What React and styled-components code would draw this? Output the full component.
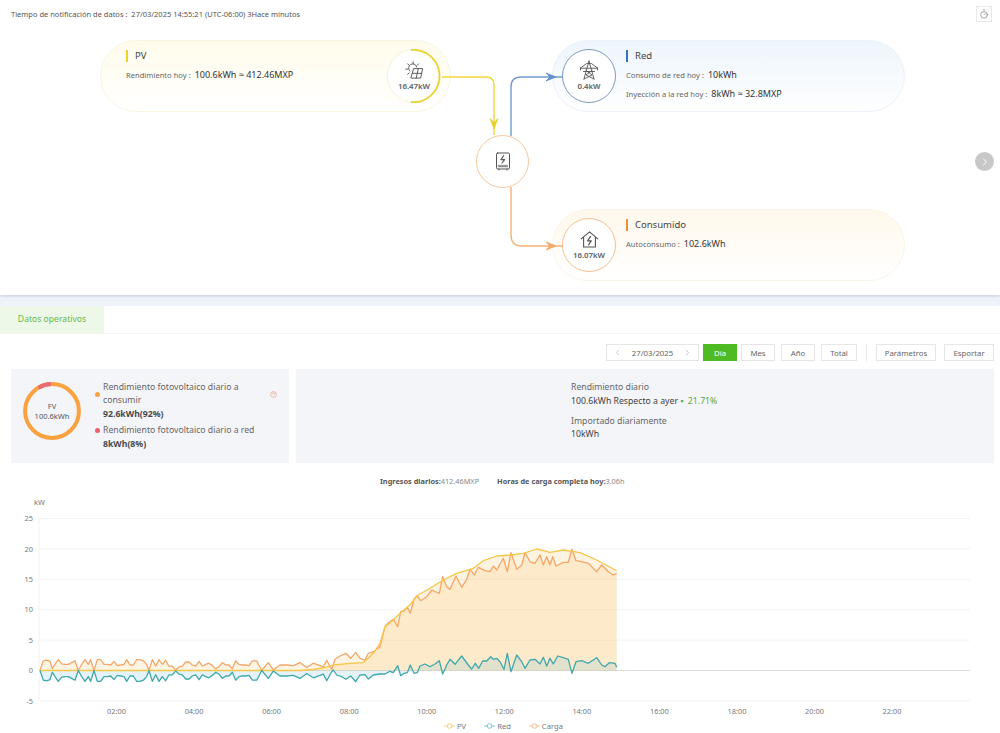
import React from "react";
import styled, { createGlobalStyle } from "styled-components";
import { Timer, ChevronLeft, ChevronRight, ChevronRight as NextIcon } from "lucide-react";

const Global = createGlobalStyle`
  html, body { margin: 0; padding: 0; background: #fff; }
  body { font-family: "Noto Sans", "Open Sans", "Liberation Sans", sans-serif; color: #444; }
  #root { width: 1000px; height: 733px; overflow: hidden; }
  * { box-sizing: border-box; }
`;

const Page = styled.div`
  width: 1000px;
  height: 733px;
  overflow: hidden;
  display: flex;
  flex-direction: column;
  background: #fff;
`;

const TopPanel = styled.section`
  height: 295px;
  flex: none;
  background: #fff;
  box-shadow: 0 1px 3px rgba(120, 135, 170, 0.35);
  position: relative;
  z-index: 1;
`;

const Header = styled.header`
  height: 28px;
  padding: 6px 8px 0 11px;
  display: flex;
  justify-content: space-between;
  align-items: flex-start;
`;

const Notice = styled.div`
  font-size: 7.5px;
  line-height: 16px;
  color: #555;
  white-space: pre;
`;

const ClockButton = styled.button`
  width: 16px;
  height: 16px;
  padding: 0;
  background: #fff;
  border: 1px solid #e8e8e8;
  display: flex;
  align-items: center;
  justify-content: center;
  color: #666;
`;

const Canvas = styled.div`
  position: relative;
  height: 267px;
`;

const Wires = styled.svg`
  position: absolute;
  left: 0;
  top: 0;
  width: 1000px;
  height: 267px;
  z-index: 2;
  pointer-events: none;
`;

const tones = {
  pv: { top: "#fffcec", edge: "#faf6e0", bar: "#f2d02c", ring: "#f6f2da" },
  grid: { top: "#edf5fc", edge: "#ebf2fa", bar: "#3b72bd", ring: "#7d9cc4" },
  load: { top: "#fff8ec", edge: "#fbf5e9", bar: "#f0913a", ring: "#f4c193" },
};

const Card = styled.div`
  position: absolute;
  left: ${(p) => p.$left}px;
  top: ${(p) => p.$top}px;
  width: ${(p) => p.$width}px;
  height: 72px;
  border-radius: 36px;
  border: 1px solid ${(p) => tones[p.$tone].edge};
  background: linear-gradient(180deg, ${(p) => tones[p.$tone].top} 0%, #fff 100%);
  display: flex;
  align-items: center;
  justify-content: ${(p) => (p.$tone === "pv" ? "space-between" : "flex-start")};
  gap: 10px;
  padding: ${(p) => (p.$tone === "pv" ? "0 9px 0 25px" : "0 0 0 9px")};
`;

const Info = styled.div`
  align-self: flex-start;
  padding-top: 9px;
  display: flex;
  flex-direction: column;
`;

const Title = styled.div`
  font-size: 9.5px;
  line-height: 12px;
  color: #444;
  border-left: 2px solid ${(p) => tones[p.$tone].bar};
  padding-left: 7px;
  margin-bottom: 6px;
`;

const Metric = styled.div`
  font-size: 7.6px;
  color: #666;
  height: 19px;
  line-height: 13px;
  white-space: pre;
`;

const MetricValue = styled.span`
  font-size: 9px;
  color: #333;
`;

const Node = styled.div`
  position: relative;
  flex: none;
  width: 54px;
  height: 54px;
  border-radius: 50%;
  background: #fff;
  border: 1px solid ${(p) => tones[p.$tone].ring};
  display: flex;
  flex-direction: column;
  align-items: center;
  justify-content: center;
  color: #555;
`;

const NodeArc = styled.svg`
  position: absolute;
  left: -1px;
  top: -1px;
  width: 54px;
  height: 54px;
`;

const NodeValue = styled.div`
  font-size: 7.8px;
  font-weight: 600;
  line-height: 11px;
  color: #5a5f66;
  margin-top: 1px;
`;

const Inverter = styled.div`
  position: absolute;
  left: 476px;
  top: 107px;
  width: 53px;
  height: 53px;
  border-radius: 50%;
  border: 1px solid #f6c79c;
  background: #fff;
  display: flex;
  align-items: center;
  justify-content: center;
  z-index: 3;
`;

const NextButton = styled.button`
  position: absolute;
  left: 975px;
  top: 124px;
  width: 19px;
  height: 19px;
  padding: 0;
  border: none;
  border-radius: 50%;
  background: #c8c8c8;
  color: #fff;
  display: flex;
  align-items: center;
  justify-content: center;
`;

const Band = styled.div`
  height: 11px;
  flex: none;
  background: #eef2f9;
`;

const TabBar = styled.nav`
  height: 28px;
  flex: none;
  border-bottom: 1px solid #f3f3f3;
  display: flex;
`;

const Tab = styled.div`
  width: 104px;
  height: 27px;
  background: #edf8e8;
  color: #68b84a;
  font-size: 8.6px;
  line-height: 27px;
  text-align: center;
`;

const Toolbar = styled.div`
  height: 35px;
  flex: none;
  padding: 10px 6px 0 606px;
  display: flex;
  align-items: flex-start;
`;

const DatePicker = styled.div`
  width: 93px;
  height: 17px;
  border: 1px solid #e6e6e6;
  display: flex;
  align-items: center;
  justify-content: space-between;
  padding: 0 6px;
  font-size: 7.8px;
  color: #666;
  margin-right: 4px;
`;

const Pale = styled.span`
  display: flex;
  color: #b5b5b5;
`;

const ToolButton = styled.button`
  width: ${(p) => p.$w}px;
  height: 17px;
  margin-right: ${(p) => p.$gap || 0}px;
  padding: 0;
  font-family: inherit;
  font-size: 7.8px;
  color: ${(p) => (p.$active ? "#fff" : "#666")};
  background: ${(p) => (p.$active ? "#4fbb22" : "#fff")};
  border: 1px solid ${(p) => (p.$active ? "#4fbb22" : "#e6e6e6")};
`;

const Divider = styled.div`
  width: 1px;
  height: 17px;
  background: #e8e8e8;
  margin: 0 9px 0 9px;
`;

const Stats = styled.div`
  height: 94px;
  flex: none;
  padding: 0 6px 0 11px;
  display: flex;
  gap: 7px;
`;

const StatPanel = styled.div`
  position: relative;
  background: #f4f5f9;
  width: ${(p) => p.$w || "auto"};
  flex: ${(p) => (p.$w ? "none" : "1")};
  display: flex;
`;

const Donut = styled.div`
  position: relative;
  flex: none;
  width: 60px;
  height: 60px;
  margin: 12px 0 0 11px;
`;

const DonutLabel = styled.div`
  position: absolute;
  inset: 0;
  display: flex;
  flex-direction: column;
  align-items: center;
  justify-content: center;
  font-size: 7.5px;
  line-height: 10.5px;
  color: #555;
`;

const Legend = styled.div`
  margin: 11.5px 0 0 21px;
  width: 160px;
  font-size: 8.7px;
  line-height: 13.5px;
  color: #666;
  display: flex;
  flex-direction: column;
  gap: 3px;
`;

const LegendLabel = styled.div`
  position: relative;
`;

const Dot = styled.i`
  position: absolute;
  left: -8.5px;
  top: 50%;
  margin-top: -2.5px;
  width: 5px;
  height: 5px;
  border-radius: 50%;
  background: ${(p) => p.$color};
`;

const Strong = styled.div`
  font-weight: 700;
  color: #4a4a4a;
`;

const Help = styled.svg`
  position: absolute;
  left: 259px;
  top: 22px;
  width: 7px;
  height: 7px;
`;

const Daily = styled.div`
  margin: 12px 0 0 275px;
  font-size: 8.7px;
  line-height: 13.6px;
  color: #666;
`;

const DailyValue = styled.div`
  color: #3f3f3f;
  margin-bottom: 6.5px;
`;

const Up = styled.span`
  color: #55a943;
`;

const Income = styled.div`
  height: 29px;
  flex: none;
  padding: 12px 0 0 380px;
  display: flex;
  gap: 18px;
  font-size: 7.35px;
  line-height: 13px;
  color: #888;
`;

const IncomeItem = styled.div`
  white-space: pre;
`;

const IncomeKey = styled.b`
  color: #555;
  font-weight: 700;
`;

const Plot = styled.svg`
  display: block;
  width: 1000px;
  height: 222px;
  flex: none;
`;

const AxisText = styled.text`
  font-size: 7.4px;
  fill: #777;
`;

const ChartLegend = styled.div`
  height: 19px;
  flex: none;
  padding: 5px 0 0 444px;
  display: flex;
  gap: 18px;
  font-size: 7.6px;
  line-height: 10px;
  color: #777;
`;

const ChartKey = styled.div`
  display: flex;
  align-items: center;
  gap: 2px;
`;

/* ---------- chart data, in page pixels ---------- */
const Z = 670.5;
const K = 6.08;
const Y = (v) => Z - v * K;

const morning = [
  [120,0],[130,1.6],[140,1.7],[150,1.5],[157,.3],[165,1],[175,1.8],[185,1.1],[195,1],[205,1],[215,1.3],[225,1.6],[235,0],[245,1],[255,1.8],[265,1],[272,1.8],[282,0],[292,1.8],[302,1.8],[312,1],[322,1],[332,.9],[342,1.5],[352,.8],[362,.9],[372,1],[380,1.8],[390,.9],[400,.9],[410,1.8],[420,1.8],[430,1.6],[440,1],[447,0],[457,1.8],[467,.7],[477,1.8],[487,1],[497,1.7],[507,.7],[517,.7],[527,.1],[537,.6],[547,.7],[557,1.4],[567,1.4],[577,.9],[587,.7],[597,1.5],[607,.7],[617,1],[627,1.2],[637,.8],[647,.3],[657,.6],[667,1.3],[677,.9],[687,.9],[697,.3],[707,1.6],[717,1],[727,.9],[737,.9],[747,.8],[757,1.6],[770,1.6],[785,0],[805,1.3],[820,.1],[840,.9],[860,.9],[880,.8],[900,1.3],[920,.5],[940,1.2],[960,.8],[970,.6],[980,1.7],[995,.2],
];
const fromMorning = (sign) => morning.map(([x, v]) => [x / 3, Y(sign * v)]);
const fromZoom = (list) => list.map(([x, y]) => [330 + x / 3, 530 + y / 3]);

const loadPts = [
  ...fromMorning(1),
  ...fromZoom([[15,388],[30,378],[48,370],[62,385],[77,367],[90,385],[105,390],[115,370],[130,365],[150,350],[165,290],[175,278],[190,268],[203,290],[212,245],[222,243],[232,232],[241,250],[252,208],[262,198],[272,212],[290,200],[305,180],[328,190],[338,140],[350,170],[360,178],[378,138],[395,172],[410,148],[420,118],[433,135],[445,112],[465,122],[480,125],[490,108],[500,120],[520,85],[532,125],[543,68],[560,118],[575,105],[585,68],[600,95],[615,100],[630,75],[640,105],[650,80],[660,105],[668,80],[678,108],[700,97],[715,97],[726,58],[738,92],[755,95],[775,100],[800,125],[815,105],[835,125],[850,135],[860,130]]),
];
const gridPts = [
  ...fromMorning(-1),
  ...fromZoom([[10,420],[20,435],[35,440],[48,448],[62,438],[77,455],[90,435],[105,434],[115,447],[130,435],[150,432],[165,432],[180,424],[190,428],[203,407],[212,437],[222,430],[232,428],[241,405],[252,430],[262,428],[270,408],[285,402],[300,410],[315,402],[328,392],[338,432],[350,405],[360,388],[375,403],[395,378],[415,405],[425,417],[436,400],[446,415],[458,393],[470,393],[482,380],[490,388],[500,385],[510,395],[522,418],[532,370],[543,425],[560,375],[575,395],[585,415],[600,390],[615,388],[630,402],[640,382],[650,408],[660,385],[670,402],[683,378],[700,383],[715,388],[726,430],[738,395],[755,392],[775,400],[800,383],[815,405],[825,410],[838,398],[855,400],[860,412]]),
];
const pvPts = [
  [40, Z], [300, Z], [313, Z - 1], [325, Z - 3],
  ...fromZoom([[10,405],[60,400],[100,398],[130,370],[150,340],[165,290],[190,270],[210,250],[240,225],[260,198],[300,175],[340,150],[380,130],[430,115],[460,92],[500,78],[540,75],[580,70],[620,57],[660,67],[700,60],[750,68],[800,90],[860,122]]),
];

const line = (pts) => pts.map(([x, y], i) => `${i ? "L" : "M"}${x.toFixed(1)} ${y.toFixed(1)}`).join("");
const area = (pts) => `${line(pts)}L${pts[pts.length - 1][0].toFixed(1)} ${Z}L${pts[0][0].toFixed(1)} ${Z}Z`;

const yTicks = [25, 20, 15, 10, 5, 0, -5];
const xTicks = ["02:00","04:00","06:00","08:00","10:00","12:00","14:00","16:00","18:00","20:00","22:00"];

/* ---------- icons ---------- */
const SolarIcon = () => (
  <svg width="19" height="19" viewBox="0 0 20 20" fill="none" stroke="#555" strokeWidth="1" strokeLinejoin="round" strokeLinecap="round">
    <path d="M5 10.5a4.4 4.4 0 1 1 7.4-4.2" />
    <path d="M8.6 0.8v2.2M2.8 3l1.5 1.5M0.8 8.6h2.2M2.8 14l1.5-1.4M14.4 3l-1.5 1.5" />
    <path d="M9.4 8h9.2l-2.2 10H6.6z" />
    <path d="M8 13h9.5M14 8l-2.2 10" />
  </svg>
);
const TowerIcon = () => (
  <svg width="20" height="20" viewBox="0 0 20 20" fill="none" stroke="#555" strokeWidth="0.9" strokeLinejoin="round" strokeLinecap="round">
    <path d="M10 1l-5 18M10 1l5 18M1.5 8L7.5 3.6h5L18.5 8zM4.5 11.5h11M7 10.5l6 4.5-8 4M13 10.5l-6 4.5 8 4" />
    <path d="M1.5 8v2M18.5 8v2" />
  </svg>
);
const InverterIcon = () => (
  <svg width="16" height="19" viewBox="0 0 16 19" fill="none" stroke="#555" strokeWidth="1" strokeLinejoin="round" strokeLinecap="round">
    <rect x="1.5" y="1" width="13" height="16" rx="1.2" />
    <path d="M8.8 3.5L6 7.6h3.6L7 11" strokeWidth="1.1" />
    <path d="M3.5 13.3h9v1.6h-9z" fill="#999" stroke="#777" strokeWidth="0.6" />
    <path d="M4 17v1M12 17v1" />
  </svg>
);
const HouseIcon = () => (
  <svg width="19" height="19" viewBox="0 0 19 19" fill="none" stroke="#555" strokeWidth="1.1" strokeLinejoin="round" strokeLinecap="round">
    <path d="M1.2 8.8L9.5 1.8l8.3 7M3.6 7.6V17h11.8V7.6" />
    <path d="M10.6 6.4L7.6 10.8h3.7l-2.8 4" strokeWidth="1.2" />
  </svg>
);
const KeyMark = ({ color }) => (
  <svg width="11" height="8" viewBox="0 0 11 8" fill="none">
    <path d="M0 4h11" stroke={color} strokeWidth="1" />
    <circle cx="5.5" cy="4" r="2.3" fill="#fff" stroke={color} strokeWidth="1" />
  </svg>
);

export default function App() {
  return (
    <Page>
      <Global />
      <TopPanel>
        <Header>
          <Notice>Tiempo de notificación de datos :  27/03/2025 14:55:21 (UTC-06:00) 3Hace minutos</Notice>
          <ClockButton aria-label="reloj"><Timer size={10} strokeWidth={1.4} /></ClockButton>
        </Header>
        <Canvas>
          <Card $tone="pv" $left={100} $top={12} $width={351}>
            <Info>
              <Title $tone="pv">PV</Title>
              <Metric>Rendimiento hoy :  <MetricValue>100.6kWh ≈ 412.46MXP</MetricValue></Metric>
            </Info>
            <Node $tone="pv">
              <NodeArc viewBox="0 0 54 54" fill="none">
                <path d="M24 0.9A26.2 26.2 0 1 1 24 53.1" stroke="#ecd22f" strokeWidth="1.7" />
              </NodeArc>
              <SolarIcon />
              <NodeValue>16.47kW</NodeValue>
            </Node>
          </Card>
          <Card $tone="grid" $left={552} $top={12} $width={353}>
            <Node $tone="grid">
              <TowerIcon />
              <NodeValue>0.4kW</NodeValue>
            </Node>
            <Info>
              <Title $tone="grid">Red</Title>
              <Metric>Consumo de red hoy :  <MetricValue>10kWh</MetricValue></Metric>
              <Metric>Inyección a la red hoy :  <MetricValue>8kWh ≈ 32.8MXP</MetricValue></Metric>
            </Info>
          </Card>
          <Card $tone="load" $left={552} $top={181} $width={353}>
            <Node $tone="load">
              <HouseIcon />
              <NodeValue>16.07kW</NodeValue>
            </Node>
            <Info>
              <Title $tone="load">Consumido</Title>
              <Metric>Autoconsumo :  <MetricValue>102.6kWh</MetricValue></Metric>
            </Info>
          </Card>
          <Wires viewBox="0 28 1000 267" fill="none">
            <path d="M442 77H486Q494 77 494 85V135" stroke="#efd83c" strokeWidth="1.4" />
            <path d="M490 118.5L494 122.5L498 118.5L494 129Z" fill="#e8d02c" stroke="#e8d02c" strokeWidth="0.8" strokeLinejoin="round" />
            <path d="M511 136V87Q511 77 521 77H563" stroke="#6f9ccf" strokeWidth="1.4" />
            <path d="M546 73L550 77L546 81L556 77Z" fill="#5f8fca" stroke="#5f8fca" strokeWidth="0.8" strokeLinejoin="round" />
            <path d="M511 187V235Q511 246 522 246H563" stroke="#f6b474" strokeWidth="1.4" />
            <path d="M546 242L550 246L546 250L556 246Z" fill="#f4a863" stroke="#f4a863" strokeWidth="0.8" strokeLinejoin="round" />
          </Wires>
          <Inverter><InverterIcon /></Inverter>
          <NextButton aria-label="siguiente"><NextIcon size={12} strokeWidth={2} /></NextButton>
        </Canvas>
      </TopPanel>
      <Band />
      <TabBar><Tab>Datos operativos</Tab></TabBar>
      <Toolbar>
        <DatePicker>
          <Pale><ChevronLeft size={9} /></Pale>
          27/03/2025
          <Pale><ChevronRight size={9} /></Pale>
        </DatePicker>
        <ToolButton $active $w={34} $gap={4}>Día</ToolButton>
        <ToolButton $w={34} $gap={6}>Mes</ToolButton>
        <ToolButton $w={34} $gap={6}>Año</ToolButton>
        <ToolButton $w={36}>Total</ToolButton>
        <Divider />
        <ToolButton $w={60} $gap={8}>Parámetros</ToolButton>
        <ToolButton $w={50}>Esportar</ToolButton>
      </Toolbar>
      <Stats>
        <StatPanel $w="278px">
          <Donut>
            <svg width="60" height="60" viewBox="0 0 60 60" fill="none">
              <circle cx="30" cy="30" r="26.9" stroke="#f9a23f" strokeWidth="4" />
              <path d="M16.6 6.7A26.9 26.9 0 0 1 29 3.1" stroke="#ea6a73" strokeWidth="4" />
            </svg>
            <DonutLabel><span>FV</span><span>100.6kWh</span></DonutLabel>
          </Donut>
          <Legend>
            <div>
              <LegendLabel><Dot $color="#f9a23f" />Rendimiento fotovoltaico diario a consumir</LegendLabel>
              <Strong>92.6kWh(92%)</Strong>
            </div>
            <div>
              <LegendLabel><Dot $color="#ee5f6c" />Rendimiento fotovoltaico diario a red</LegendLabel>
              <Strong>8kWh(8%)</Strong>
            </div>
          </Legend>
          <Help viewBox="0 0 8 8" fill="none">
            <circle cx="4" cy="4" r="3.3" stroke="#f2a58c" strokeWidth="0.9" />
            <path d="M3 3.2a1 1 0 1 1 1.5 .9L4 4.6M4 5.8v.3" stroke="#f2a58c" strokeWidth="0.7" />
          </Help>
        </StatPanel>
        <StatPanel>
          <Daily>
            Rendimiento diario
            <DailyValue>100.6kWh Respecto a ayer <Up>▪&nbsp; 21.71%</Up></DailyValue>
            Importado diariamente
            <DailyValue>10kWh</DailyValue>
          </Daily>
        </StatPanel>
      </Stats>
      <Income>
        <IncomeItem><IncomeKey>Ingresos diarios:</IncomeKey>412.46MXP</IncomeItem>
        <IncomeItem><IncomeKey>Horas de carga completa hoy:</IncomeKey>3.06h</IncomeItem>
      </Income>
      <Plot viewBox="0 492 1000 222" fill="none">
        <AxisText x="34" y="505">kW</AxisText>
        {yTicks.map((v) => (
          <g key={v}>
            <path d={`M39 ${Y(v)}H970`} stroke={v === 0 ? "#dcdcdc" : "#f4f4f4"} />
            <AxisText x="33" y={Y(v) + 2.6} textAnchor="end">{v}</AxisText>
          </g>
        ))}
        <path d="M39 518V700" stroke="#f2f2f2" />
        <path d={area(pvPts)} fill="#f8c775" fillOpacity="0.22" />
        <path d={area(loadPts)} fill="#f8c775" fillOpacity="0.2" />
        <path d={area(gridPts)} fill="#7cc4d4" fillOpacity="0.2" />
        <path d={line(loadPts)} stroke="#f5a768" strokeWidth="1.3" strokeLinejoin="round" />
        <path d={line(pvPts)} stroke="#f6c648" strokeWidth="1.3" strokeLinejoin="round" />
        <path d={line(gridPts)} stroke="#3fa7ae" strokeWidth="1.3" strokeLinejoin="round" />
        {xTicks.map((t, i) => (
          <AxisText key={t} x={39 + 77.55 * (i + 1)} y="713.5" textAnchor="middle">{t}</AxisText>
        ))}
      </Plot>
      <ChartLegend>
        <ChartKey><KeyMark color="#f6d27a" />PV</ChartKey>
        <ChartKey><KeyMark color="#7cc5d3" />Red</ChartKey>
        <ChartKey><KeyMark color="#f7c09a" />Carga</ChartKey>
      </ChartLegend>
    </Page>
  );
}
